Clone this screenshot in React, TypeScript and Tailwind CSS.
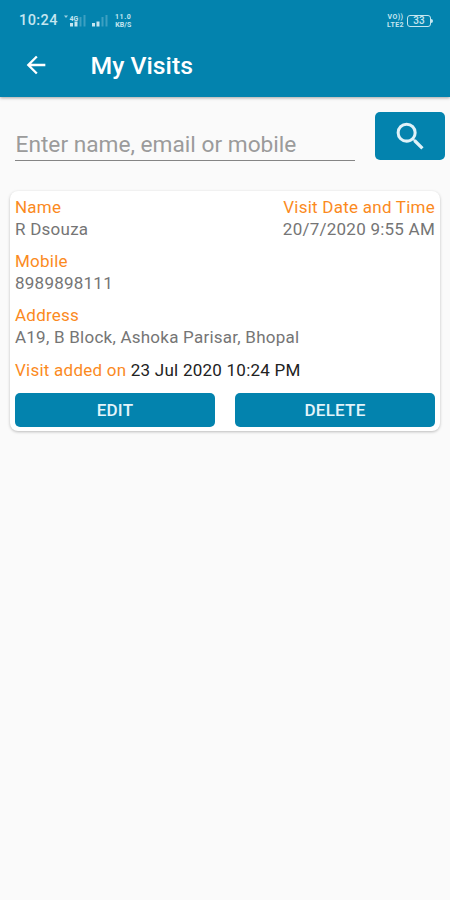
import * as React from "react";
import { MdArrowBack, MdSearch } from "react-icons/md";

interface Visit {
    name: string;
    dateTime: string;
    mobile: string;
    address: string;
    addedOn: string;
}

const visits: Visit[] = [
    {
        name: "R Dsouza",
        dateTime: "20/7/2020 9:55 AM",
        mobile: "8989898111",
        address: "A19, B Block, Ashoka Parisar, Bhopal",
        addedOn: "23 Jul 2020 10:24 PM",
    },
];

function Signal({ roaming }: { roaming?: boolean }) {
    return (
        <svg width="22" height="14" viewBox="0 0 22 14" fill="#c5e6f0">
            {roaming && <path d="M0 1.5h4L2 4z" opacity=".8" />}
            {roaming && <text x="5.5" y="6.5" fontSize="7" fontWeight="700" fontFamily="Roboto">4G</text>}
            <rect x="6" y="9" width="3" height="3.5" />
            <rect x="10.5" y="7.5" width="3" height="5" />
            <rect x="15.5" y="3" width="2" height="9.5" opacity=".3" />
            <rect x="19.5" y="1" width="2" height="11.5" opacity=".3" />
        </svg>
    );
}

function StatusBar() {
    return (
        <div className="flex h-[42px] items-center pl-[19px] pr-[17px] text-[#c5e6f0]">
            <span className="w-[45px] text-[14.5px] font-medium tracking-[0.4px]">10:24</span>
            <Signal roaming />
            <Signal />
            <div className="ml-[7px] flex flex-col text-center text-[7px] font-bold leading-[8px] tracking-[0.6px]">
                <span>11.0</span>
                <span className="tracking-[0.1px]">KB/S</span>
            </div>
            <div className="ml-auto flex flex-col text-center text-[7px] font-bold leading-[8px] tracking-[0.4px]">
                <span>VO))</span>
                <span>LTE2</span>
            </div>
            <div className="ml-[3px] flex h-[12px] w-[24px] items-center justify-center rounded-[3px] border border-[#c5e6f0] text-[10px] font-medium leading-none">
                33
            </div>
            <div className="h-[4px] w-[2px] rounded-r-sm bg-[#c5e6f0]" />
        </div>
    );
}

function Field({ label, value }: { label: string; value: string }) {
    return (
        <div>
            <div className="text-[#fb8a1e]">{label}</div>
            <div className="text-[#757575]">{value}</div>
        </div>
    );
}

function VisitCard({ visit }: { visit: Visit }) {
    return (
        <section className="mx-[10px] mt-[30px] h-[240px] rounded-[8px] bg-white px-[5px] pt-[4.5px] text-[17px] leading-[22.5px] tracking-[0.24px] shadow-[0_1px_3px_rgba(0,0,0,0.25)]">
            <div className="flex justify-between">
                <Field label="Name" value={visit.name} />
                <div className="text-right">
                    <Field label="Visit Date and Time" value={visit.dateTime} />
                </div>
            </div>
            <div className="mt-[9px]">
                <Field label="Mobile" value={visit.mobile} />
            </div>
            <div className="mt-[9px]">
                <Field label="Address" value={visit.address} />
            </div>
            <div className="mt-[10px] text-[#222]">
                <span className="text-[#fb8a1e]">Visit added on</span> {visit.addedOn}
            </div>
            <div className="mt-[11.5px] grid grid-cols-2 gap-5">
                <button className="h-[34px] rounded-[5px] bg-[#0383ae] pt-px font-medium text-[#e4f4fa]">EDIT</button>
                <button className="h-[34px] rounded-[5px] bg-[#0383ae] pt-px font-medium text-[#e4f4fa]">DELETE</button>
            </div>
        </section>
    );
}

export default function App() {
    const [query, setQuery] = React.useState("");

    return (
        <div className="h-screen w-full overflow-hidden bg-[#fafafa] font-['Roboto',sans-serif]">
            <header className="h-[97px] bg-[#0383ae] shadow-[0_1px_3px_rgba(0,0,0,0.35)]">
                <StatusBar />
                <div className="flex h-[48px] items-center pl-[22px] text-white">
                    <MdArrowBack className="-mt-[2px] size-[28px]" />
                    <h1 className="ml-[40.5px] text-[24.8px] font-medium">My Visits</h1>
                </div>
            </header>

            <div className="flex pl-[15px] pr-[5px] pt-[15px]">
                <input
                    value={query}
                    onChange={(e) => setQuery(e.target.value)}
                    placeholder="Enter name, email or mobile"
                    className="mt-[14px] h-[35px] w-[340px] border-b border-[#858585] pl-[0.5px] pt-[3px] text-[22.7px] outline-none placeholder:text-[#9b9b9b]"
                />
                <button className="ml-5 flex h-[48px] w-[70px] items-center justify-center rounded-[5px] bg-[#0383ae] text-[#dff2f9]">
                    <MdSearch className="size-[37px]" />
                </button>
            </div>

            {visits.map((visit) => (
                <VisitCard key={visit.mobile} visit={visit} />
            ))}
        </div>
    );
}
